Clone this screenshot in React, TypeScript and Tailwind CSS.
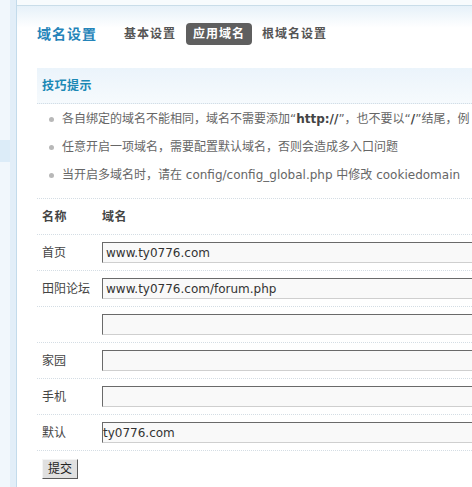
import React from "react";

const FONT = '"DejaVu Sans", "Noto Sans CJK SC", sans-serif';

function Tip({ children }: { children: React.ReactNode }) {
  return (
    <div className="flex h-[28px] items-center whitespace-nowrap pl-[12px]">
      <span className="mr-[8px] h-[5px] w-[5px] shrink-0 rounded-full bg-[#b8b8b8]" />
      <span className="text-[12px] text-[#666]">{children}</span>
    </div>
  );
}

function Row({ label, value, pad = 4 }: { label: string; value: string; pad?: number }) {
  return (
    <div className="flex h-[36px] items-center border-b border-dotted border-[#d4dde4]">
      <div className="w-[65px] shrink-0 pl-[5px] text-[12px] text-[#444]">{label}</div>
      <div
        className={
          "flex h-[21px] w-[420px] shrink-0 items-center border border-t-[#6a6a6a] border-l-[#6a6a6a] border-r-[#cfcfcf] border-b-[#cfcfcf] bg-[#f9f9f9] text-[12px] text-[#333] " +
          (pad === 4 ? "pl-[3px]" : "pl-0")
        }
      >
        {value}
      </div>
    </div>
  );
}

export default function App() {
  return (
    <div className="flex h-[487px] w-[472px] overflow-hidden bg-white" style={{ fontFamily: FONT }}>
      {/* left sidebar edge */}
      <div className="flex w-[17px] shrink-0 border-r border-[#c3dbeb]">
        <div className="flex w-[10px] flex-col bg-[#f1f7fc]">
          <div className="h-[140px]" />
          <div className="h-[22px] bg-[#dcecf8]" />
          <div className="flex-1" />
        </div>
        <div className="w-[6px] bg-[#e2eef8]" />
      </div>

      <div className="flex min-w-0 flex-1 flex-col">
        {/* top strip */}
        <div className="h-[6px] shrink-0 border-b border-[#c9dde9] bg-[#f7fbfd]" />
        {/* header */}
        <div className="flex h-[56px] shrink-0 items-center gap-[20px] bg-[linear-gradient(#e6f1f9,#ffffff_22px)] pl-[20px]">
          <div className="text-[14px] font-bold tracking-[1px] text-[#2584b9]">域名设置</div>
          <div className="ml-[7px] flex items-center gap-[10px] whitespace-nowrap text-[12px] font-bold tracking-[1px]">
            <span className="text-[#555]">基本设置</span>
            <span className="rounded-[4px] bg-[#5f5f5f] px-[7px] py-[2px] text-white">应用域名</span>
            <span className="text-[#555]">根域名设置</span>
          </div>
        </div>

        <div className="mt-[6px] pl-[20px]">
          {/* tips header */}
          <div className="flex h-[36px] items-center border-b border-dotted border-[#d4dde4] bg-[linear-gradient(#ebf4fb,#f6fafd)] pl-[5px]">
            <span className="text-[12px] font-bold tracking-[0.5px] text-[#1b88b5]">技巧提示</span>
          </div>
          <div className="overflow-hidden border-b border-dotted border-[#d4dde4] pb-[9px] pt-[1px]">
            <Tip>
              各自绑定的域名不能相同，域名不需要添加“<b className="text-[#444]">http://</b>”，也不要以“<b className="text-[#444]">/</b>”结尾，例
            </Tip>
            <Tip>任意开启一项域名，需要配置默认域名，否则会造成多入口问题</Tip>
            <Tip>当开启多域名时，请在 config/config_global.php 中修改 cookiedomain</Tip>
          </div>

          {/* table */}
          <div className="flex h-[36px] items-center border-b border-dotted border-[#d4dde4] text-[12px] font-bold text-[#444]">
            <div className="w-[65px] pl-[5px] tracking-[0.5px]">名称</div>
            <div className="tracking-[0.5px]">域名</div>
          </div>
          <Row label="首页" value="www.ty0776.com" />
          <Row label="田阳论坛" value="www.ty0776.com/forum.php" />
          <Row label="" value="" />
          <Row label="家园" value="" />
          <Row label="手机" value="" />
          <Row label="默认" value="ty0776.com" pad={0} />

          <div className="pl-[5px] pt-[8px]">
            <button className="flex h-[20px] w-[36px] items-center justify-center border border-t-[#f4f4f4] border-l-[#f4f4f4] border-r-[#5a5a5a] border-b-[#5a5a5a] bg-[#e0e0e0] text-[12px] text-[#222]">
              提交
            </button>
          </div>
        </div>
      </div>
    </div>
  );
}
